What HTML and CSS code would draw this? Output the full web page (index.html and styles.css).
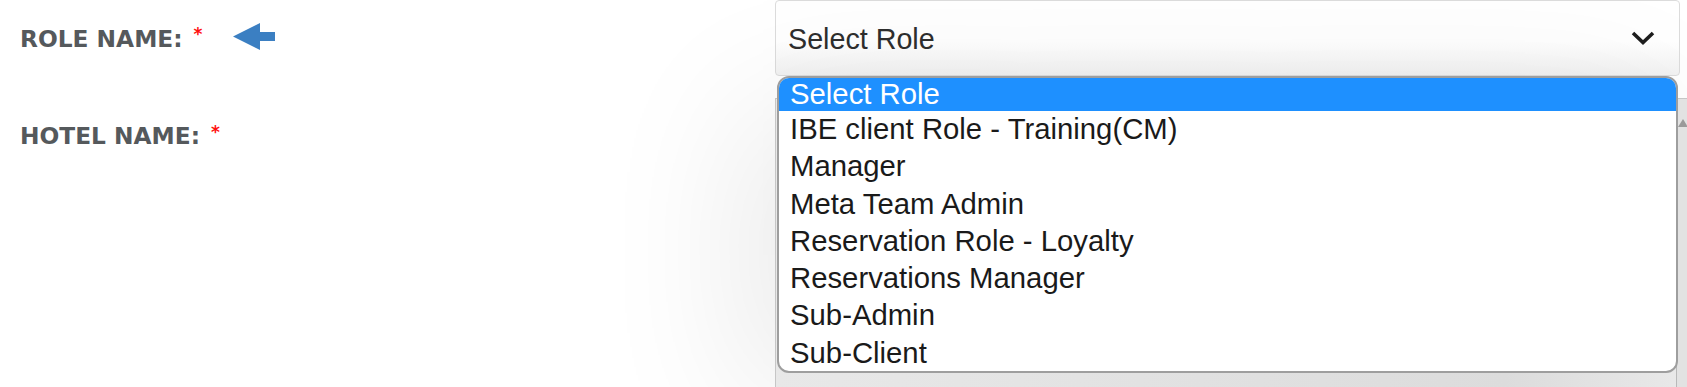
FILE: index.html
```html
<!DOCTYPE html>
<html lang="en">
<head>
<meta charset="utf-8">
<title>Role form</title>
<link rel="stylesheet" href="styles.css">
</head>
<body>
<form class="form">
  <div class="label-cell role-label">
    <span class="label">ROLE NAME:</span><span class="req">*</span>
    <svg class="pointer" width="43" height="28" viewBox="0 0 43 28" aria-hidden="true">
      <polygon points="0,13.5 27,0 27,9 42,9 42,18 27,18 27,27" fill="#3b7fc2"/>
    </svg>
  </div>
  <div class="field role-field">
    <div class="select">
      <span class="select-value">Select Role</span>
      <svg class="chevron" width="24" height="16" viewBox="0 0 24 16" aria-hidden="true">
        <polyline points="2,3 12,12.5 22,3" fill="none" stroke="#1e1e1e" stroke-width="3.6" stroke-linejoin="miter"/>
      </svg>
    </div>
    <ul class="dropdown">
      <li class="opt active">Select Role</li>
      <li class="opt">IBE client Role - Training(CM)</li>
      <li class="opt">Manager</li>
      <li class="opt">Meta Team Admin</li>
      <li class="opt">Reservation Role - Loyalty</li>
      <li class="opt">Reservations Manager</li>
      <li class="opt">Sub-Admin</li>
      <li class="opt">Sub-Client</li>
    </ul>
  </div>
  <div class="label-cell hotel-label">
    <span class="label">HOTEL NAME:</span><span class="req">*</span>
  </div>
  <div class="field hotel-field">
    <div class="listbox">
      <div class="scrollbar"><span class="scroll-up"></span></div>
    </div>
  </div>
</form>
</body>
</html>
```
FILE: styles.css
```css
html, body {
  margin: 0;
  padding: 0;
  background: #ffffff;
  overflow: hidden;
}

.form {
  display: grid;
  grid-template-columns: 775px 905px;
  grid-template-rows: 76px 1fr;
  row-gap: 22px;
  width: 1687px;
  height: 387px;
  overflow: hidden;
}

.label-cell {
  display: flex;
  align-items: center;
  padding-left: 20px;
  font-family: "DejaVu Sans", sans-serif;
  font-weight: bold;
  font-size: 23.3px;
  color: #55595c;
}

.hotel-label {
  align-items: flex-start;
  padding-top: 24px;
}

.label {
  line-height: normal;
}

.req {
  align-self: flex-start;
  color: #ff1010;
  font-size: 17px;
  margin-left: 11px;
  line-height: 1;
}

.role-label .req {
  margin-top: 26px;
}

.hotel-label .req {
  margin-top: 2px;
}

.pointer {
  margin-left: 31px;
  margin-top: -2px;
}

.field {
  position: relative;
}

.select {
  box-sizing: border-box;
  height: 76px;
  display: flex;
  align-items: center;
  justify-content: space-between;
  padding: 0 24px 0 12px;
  border: 1px solid #dcdcdc;
  border-radius: 4px;
  background: linear-gradient(#ffffff 55%, #f2f2f2);
  font-family: "Liberation Sans", Arial, sans-serif;
  font-size: 28.7px;
  color: #2e2e2e;
}

.select-value {
  padding-top: 2px;
}

.dropdown {
  position: absolute;
  z-index: 2;
  top: 76px;
  left: 2px;
  width: 901px;
  height: 297px;
  box-sizing: border-box;
  margin: 0;
  padding: 0;
  list-style: none;
  background: #ffffff;
  border: 2px solid #9e9e9e;
  border-radius: 12px;
  overflow: hidden;
  font-family: "Liberation Sans", Arial, sans-serif;
  font-size: 29.3px;
  color: #1a1a1a;
}

.opt {
  height: 37.3px;
  line-height: 35.6px;
  padding-left: 11px;
  white-space: nowrap;
}

.opt:first-child {
  height: 33px;
  line-height: 31px;
}

.opt.active {
  background: #1e90ff;
  color: #ffffff;
}

.hotel-field {
  z-index: 1;
}

.listbox {
  box-sizing: border-box;
  width: 912px;
  height: 289px;
  display: flex;
  justify-content: flex-end;
  background: linear-gradient(90deg, #e8e8e8, #dcdcdc 80%, #e9e9e9);
  border: 1px solid #c6c6c6;
  border-right: 0;
  border-bottom: 0;
  box-shadow: -30px 10px 150px rgba(0, 0, 0, 0.09);
}

.scrollbar {
  width: 10px;
  background: #e2e2e2;
  border-left: 1px solid #b9b9b9;
  position: relative;
}

.scroll-up {
  position: absolute;
  top: 20px;
  left: 1px;
  width: 0;
  height: 0;
  border-left: 5px solid transparent;
  border-right: 5px solid transparent;
  border-bottom: 8px solid #9a9a9a;
}
```
